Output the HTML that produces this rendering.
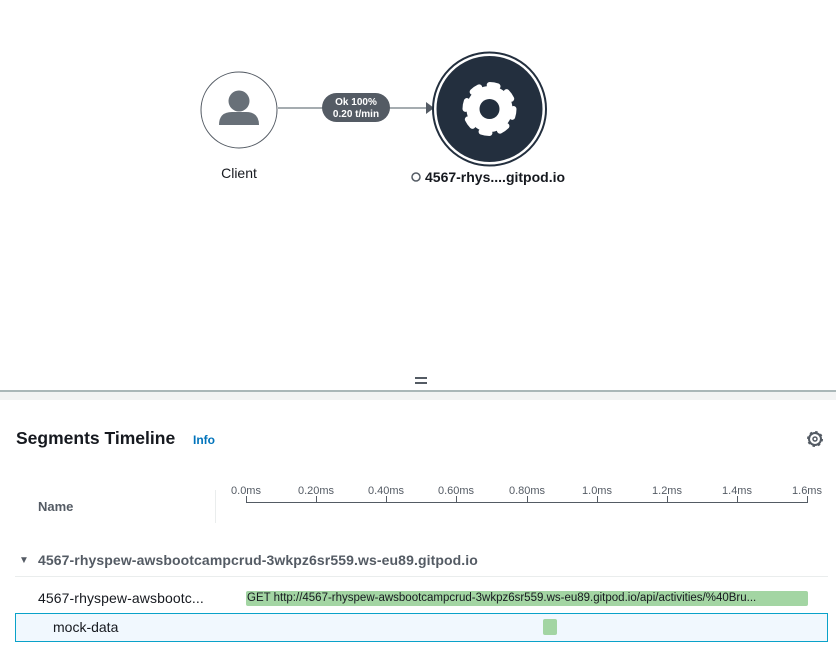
<!DOCTYPE html>
<html><head><meta charset="utf-8"><style>
*{margin:0;padding:0;box-sizing:border-box}
body{width:836px;height:657px;background:#fff;font-family:"Liberation Sans",sans-serif;color:#16191f;position:relative;overflow:hidden}
.a{position:absolute;white-space:nowrap}
</style></head><body>
<svg class="a" style="left:0;top:0" width="836" height="400">
  <circle cx="239" cy="110" r="38" fill="#fff" stroke="#545b64" stroke-width="1"/>
  <circle cx="239" cy="101" r="10.5" fill="#687078"/>
  <path d="M219 125 Q219 112 232 112 L246 112 Q259 112 259 125 Z" fill="#687078"/>
  <line x1="278" y1="108" x2="428" y2="108" stroke="#879196" stroke-width="1.5"/>
  <path d="M426 102 L434 108 L426 114 Z" fill="#545b64"/>
  <rect x="322" y="93" width="68" height="29" rx="14.5" fill="#545b64"/>
  <text x="356" y="105" font-size="10" font-weight="bold" fill="#fff" text-anchor="middle" font-family="Liberation Sans">Ok 100%</text>
  <text x="356" y="117" font-size="10" font-weight="bold" fill="#fff" text-anchor="middle" font-family="Liberation Sans">0.20 t/min</text>
  <circle cx="489.5" cy="109" r="56.5" fill="#fff" stroke="#232f3e" stroke-width="2"/>
  <circle cx="489.5" cy="109" r="53" fill="#232f3e"/>
  <circle cx="489.5" cy="109" r="23" fill="#fff"/>
  <circle cx="489.5" cy="109" r="24" fill="none" stroke="#fff" stroke-width="6" stroke-dasharray="8 10.85" stroke-linecap="round"/>
  <circle cx="489.5" cy="109" r="10" fill="#232f3e"/>
  <text x="239" y="178" font-size="14" text-anchor="middle" fill="#16191f" font-family="Liberation Sans">Client</text>
  <circle cx="416" cy="177" r="4" fill="none" stroke="#545b64" stroke-width="1.5"/>
  <text x="425" y="182" font-size="14" font-weight="bold" fill="#16191f" font-family="Liberation Sans">4567-rhys....gitpod.io</text>
  <rect x="415" y="377" width="12" height="2" fill="#545b64"/>
  <rect x="415" y="382" width="12" height="2" fill="#545b64"/>
  <rect x="0" y="390" width="836" height="2" fill="#aab7b8"/>
  <rect x="0" y="392" width="836" height="8" fill="#f2f3f3"/>
</svg>
<div class="a" style="left:16px;top:428px;font-size:17.5px;font-weight:bold">Segments Timeline</div>
<div class="a" style="left:193px;top:433px;font-size:12px;font-weight:bold;color:#0073bb">Info</div>
<svg class="a" style="left:806px;top:430px" width="18" height="18" viewBox="0 0 18 18">
  <circle cx="9" cy="9" r="6" fill="none" stroke="#545b64" stroke-width="2"/>
  <circle cx="9" cy="9" r="6.5" fill="none" stroke="#545b64" stroke-width="3" stroke-dasharray="2.2 2.9"/>
  <circle cx="9" cy="9" r="2" fill="none" stroke="#545b64" stroke-width="1.5"/>
</svg>
<div class="a" style="left:38px;top:499px;font-size:13px;font-weight:bold;color:#545b64">Name</div>
<div class="a" style="left:215px;top:490px;width:1px;height:33px;background:#eaeded"></div>
<svg class="a" style="left:0;top:480px" width="836" height="30">
  <g font-size="11" fill="#545b64" text-anchor="middle" font-family="Liberation Sans">
    <text x="246" y="14">0.0ms</text><text x="316" y="14">0.20ms</text><text x="386" y="14">0.40ms</text>
    <text x="456" y="14">0.60ms</text><text x="527" y="14">0.80ms</text><text x="597" y="14">1.0ms</text>
    <text x="667" y="14">1.2ms</text><text x="737" y="14">1.4ms</text><text x="807" y="14">1.6ms</text>
  </g>
  <g stroke="#545b64" stroke-width="1">
    <line x1="246" y1="22.5" x2="808" y2="22.5"/>
    <line x1="246.5" y1="16" x2="246.5" y2="23"/><line x1="316.5" y1="16" x2="316.5" y2="23"/>
    <line x1="386.5" y1="16" x2="386.5" y2="23"/><line x1="456.5" y1="16" x2="456.5" y2="23"/>
    <line x1="527.5" y1="16" x2="527.5" y2="23"/><line x1="597.5" y1="16" x2="597.5" y2="23"/>
    <line x1="667.5" y1="16" x2="667.5" y2="23"/><line x1="737.5" y1="16" x2="737.5" y2="23"/>
    <line x1="807.5" y1="16" x2="807.5" y2="23"/>
  </g>
</svg>
<div class="a" style="left:19px;top:555px;font-size:10px;color:#545b64">▼</div>
<div class="a" style="left:38px;top:552px;font-size:14px;font-weight:bold;color:#545b64;letter-spacing:0.1px">4567-rhyspew-awsbootcampcrud-3wkpz6sr559.ws-eu89.gitpod.io</div>
<div class="a" style="left:15px;top:576px;width:813px;height:1px;background:#eaeded"></div>
<div class="a" style="left:38px;top:590px;font-size:14px;letter-spacing:0.1px">4567-rhyspew-awsbootc...</div>
<div class="a" style="left:246px;top:591px;width:562px;height:15px;background:#a3d5a3;border-radius:2px;font-size:11.5px;line-height:15px;padding-left:1px;overflow:hidden">GET http://4567-rhyspew-awsbootcampcrud-3wkpz6sr559.ws-eu89.gitpod.io/api/activities/%40Bru...</div>
<div class="a" style="left:15px;top:613px;width:813px;height:29px;background:#f1f8fe;border:1px solid #0aa2c9"></div>
<div class="a" style="left:53px;top:619px;font-size:14px">mock-data</div>
<div class="a" style="left:543px;top:619px;width:14px;height:16px;background:#a3d5a3;border-radius:2px"></div>
</body></html>
